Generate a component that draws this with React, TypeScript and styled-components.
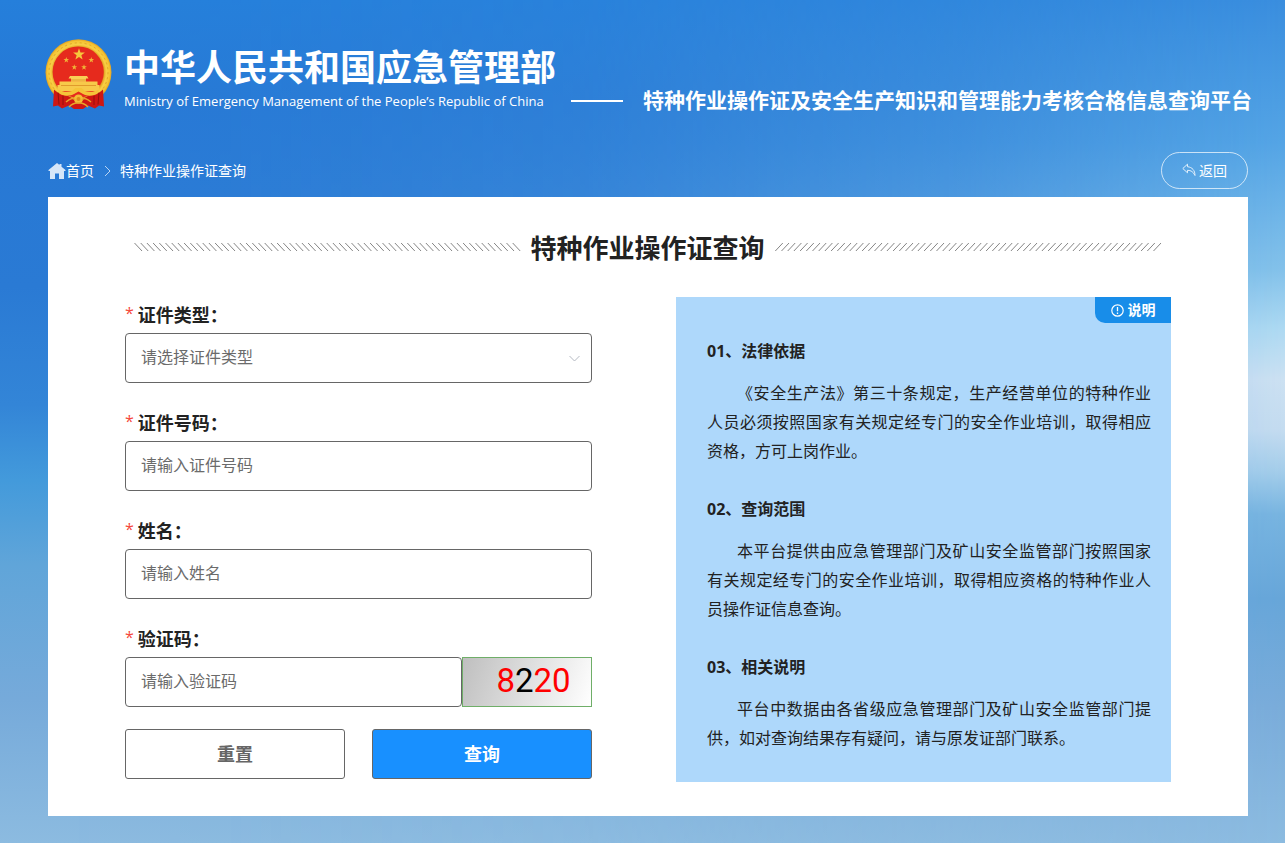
import React from 'react';
import styled, { createGlobalStyle } from 'styled-components';

const GlobalStyle = createGlobalStyle`
  *, *::before, *::after { box-sizing: border-box; }
  body {
    margin: 0;
    font-family: 'Open Sans', 'Noto Sans CJK SC', sans-serif;
    font-size: 16px;
    color: #222;
  }
  h1, h2, h3, p { margin: 0; }
  input, select, button { font-family: inherit; }
`;

const Page = styled.div`
  position: relative;
  isolation: isolate;
  min-height: 100vh;
  padding: 39px 37px 27px 48px;
  background: linear-gradient(
    180deg,
    #257fdb 0%, #2678d5 12%, #2a7ad4 34%, #3385d7 48%, #439adb 57%,
    #60a5d9 67%, #76aada 83%, #8cbbe0 100%
  );

  &::before {
    content: '';
    position: absolute;
    inset: 0;
    z-index: -1;
    background: linear-gradient(
      180deg,
      #3a8ede 0%, #55a5e5 17%, #84c2ea 32%, #aedaf2 39%, #cde1f2 45%,
      #c5dcf0 51%, #a4cdea 56%, #78b4e0 61%, #67a6d9 71%, #7aacda 84%, #8cbbe0 100%
    );
    mask-image: linear-gradient(90deg, transparent 5%, rgba(0, 0, 0, 0.2) 45%, rgba(0, 0, 0, 0.55) 75%, #000 100%);
  }
`;

const Header = styled.header`
  display: flex;
  align-items: flex-end;
  height: 71px;
  margin-left: -3px;
  color: #fff;
  white-space: nowrap;

  > * { flex: none; }
`;

const Ministry = styled.div`
  margin-left: 12px;
`;

const MinistryName = styled.h1`
  font-size: 36px;
  line-height: 48px;
  font-weight: 700;
`;

const MinistryEnglish = styled.p`
  font-size: 13px;
  line-height: 18px;
`;

const Dash = styled.span`
  width: 52px;
  height: 2px;
  margin: 0 20px 8px 15px;
  background: #fff;
`;

const Platform = styled.p`
  font-size: 21px;
  line-height: 20px;
  font-weight: 700;
`;

const NavRow = styled.div`
  display: flex;
  align-items: center;
  justify-content: space-between;
  margin: 42px 0 8px;
`;

const Crumbs = styled.nav`
  display: flex;
  align-items: center;
  font-size: 14px;
  line-height: 20px;
  color: #fff;
`;

const CrumbLink = styled.a`
  display: flex;
  align-items: center;
  color: inherit;
  text-decoration: none;
`;

const CrumbArrow = styled.svg`
  margin: 0 9px 0 10px;
`;

const BackButton = styled.button`
  display: flex;
  align-items: center;
  justify-content: center;
  gap: 3px;
  width: 87px;
  height: 37px;
  padding: 0 0 2px;
  border: 1px solid rgba(255, 255, 255, 0.7);
  border-radius: 19px;
  background: transparent;
  color: #fff;
  font-size: 14px;
  cursor: pointer;
`;

const Card = styled.main`
  padding: 33px 77px 34px;
  background: #fff;
`;

const TitleRow = styled.div`
  display: flex;
  align-items: center;
  gap: 10px;
  margin: 0 10px 31px 9px;
`;

const Title = styled.h2`
  font-size: 26px;
  line-height: 36px;
  font-weight: 700;
`;

const HatchSvg = styled.svg<{ $flip?: boolean }>`
  flex: 1;
  min-width: 0;
  height: 8px;
  margin-bottom: 2px;
  transform: ${(p) => (p.$flip ? 'scaleX(-1)' : 'none')};
`;

const Columns = styled.div`
  display: grid;
  grid-template-columns: 467fr 495fr;
  column-gap: 84px;
`;

const Form = styled.form`
  display: flex;
  flex-direction: column;
  gap: 22px;
`;

const Field = styled.div`
  display: flex;
  flex-direction: column;
`;

const Label = styled.label`
  display: flex;
  align-items: center;
  height: 36px;
  font-size: 18px;
  line-height: 36px;
  font-weight: 700;

  &::before {
    content: '*';
    margin-right: 4px;
    font-weight: 400;
    font-size: 16px;
    line-height: 32px;
    align-self: flex-start;
    color: #f5483b;
  }
`;

const controlStyle = `
  width: 100%;
  height: 50px;
  padding: 0 15px 2px;
  border: 1px solid #666;
  border-radius: 4px;
  background: #fff;
  font-size: 16px;
  color: #6b6b6b;
  outline: none;
`;

const TextInput = styled.input`
  ${controlStyle}
  min-width: 0;
  &::placeholder { color: #6b6b6b; opacity: 1; }
`;

const SelectWrap = styled.div`
  position: relative;
`;

const Select = styled.select`
  ${controlStyle}
  display: block;
  appearance: none;
`;

const SelectArrow = styled.svg`
  position: absolute;
  right: 12px;
  top: 22px;
  pointer-events: none;
`;

const CaptchaRow = styled.div`
  display: flex;
`;

const Captcha = styled.button`
  flex: none;
  width: 130px;
  height: 50px;
  padding: 0 0 2px 13px;
  border: 1px solid #6fae68;
  background: linear-gradient(110deg, #bfbfbf 0%, #fff 100%);
  font-family: Roboto, sans-serif;
  font-size: 33px;
  line-height: 44px;
  cursor: pointer;
`;

const Digit = styled.span<{ $color: string }>`
  color: ${(p) => p.$color};
`;

const Actions = styled.div`
  display: grid;
  grid-template-columns: 1fr 1fr;
  gap: 27px;
`;

const ActionButton = styled.button<{ $primary?: boolean }>`
  height: 50px;
  padding: 0 0 2px;
  border: 1px solid #666;
  border-radius: 3px;
  background: ${(p) => (p.$primary ? '#1890ff' : '#fff')};
  color: ${(p) => (p.$primary ? '#fff' : '#666')};
  font-size: 18px;
  font-weight: 700;
  cursor: pointer;
`;

const Notice = styled.aside`
  position: relative;
  display: flex;
  flex-direction: column;
  gap: 29px;
  padding: 40px 20px 29px 31px;
  background: #aed8fb;
  line-height: 29px;
`;

const NoticeTag = styled.div`
  position: absolute;
  top: 0;
  right: 0;
  display: flex;
  align-items: center;
  justify-content: center;
  gap: 4px;
  width: 76px;
  height: 26px;
  border-bottom-left-radius: 10px;
  background: #188de9;
  color: #fff;
  font-size: 14px;
  line-height: 26px;
  font-weight: 700;
`;

const NoticeHeading = styled.h3`
  margin-bottom: 13px;
  font-size: 16px;
  font-weight: 700;
`;

const NoticeText = styled.p`
  text-indent: 30px;
  text-align: justify;
`;

function starPoints(cx: number, cy: number, r: number) {
  return Array.from({ length: 10 }, (_, i) => {
    const radius = i % 2 ? r * 0.4 : r;
    const angle = (Math.PI / 5) * i - Math.PI / 2;
    return `${(cx + radius * Math.cos(angle)).toFixed(2)},${(cy + radius * Math.sin(angle)).toFixed(2)}`;
  }).join(' ');
}

const smallStars = [[21.3, 21], [46.3, 21], [29.3, 28.2], [39, 28.2]];

function Emblem() {
  return (
    <svg width="67" height="71" viewBox="0 0 67 71" role="img" aria-label="国徽">
      <defs>
        <radialGradient id="gold" cx="50%" cy="50%" r="50%">
          <stop offset="76%" stopColor="#dc9a1c" />
          <stop offset="84%" stopColor="#f8cf45" />
          <stop offset="94%" stopColor="#f5c534" />
          <stop offset="100%" stopColor="#e0a024" />
        </radialGradient>
      </defs>
      <circle cx="33.5" cy="33.3" r="33" fill="url(#gold)" />
      <circle cx="33.5" cy="33.3" r="29.5" fill="none" stroke="#e0a428" strokeWidth="1" strokeDasharray="2 3" />
      <circle cx="33.2" cy="33" r="25.6" fill="#e62a1d" />
      <polygon points={starPoints(34, 15.5, 6.2)} fill="#f6c83c" />
      {smallStars.map(([x, y]) => (
        <polygon key={`${x}-${y}`} points={starPoints(x, y, 3)} fill="#f0b437" />
      ))}
      <path d="M25 37h17l1.500 2.500h-20z M26 39.500h15v3.200h-15z" fill="#f9cf55" />
      <path d="M14.500 42.500h38v3.500h2v6H12.500v-6h2z" fill="#f7c94a" />
      <path d="M16 46.500h35M26 41h15" stroke="#d98f25" strokeWidth=".8" />
      <path d="M9 50.500c4 4 9 6 14 6.500l10 5 10-5c6-.5 11-2.500 15-6.500l1 17-5-1-4 3-7-3-5 3.500h-9l-5-3.500-7 3-4-3-5 1z" fill="#cf1713" />
      <path d="M13 53.500l1 12M18 57l0 9M49 57l0 9M54 53.500l-1 12" stroke="#96100d" strokeWidth="1" />
      <path d="M13 50.500c6 3 10 2.500 14 1.500l3.500-3h6l3.500 3c4 1 8 1.500 14-1.500l-2 4.500c-5 2-10 2-14 0l-4.500-2.500L29 55c-4 2-9 2-14 0z" fill="#f5c439" />
      <circle cx="33.500" cy="60" r="4.600" fill="#f3bd36" />
      <circle cx="33.500" cy="60" r="2" fill="#dc8d1c" />
      <path d="M21 63c4-3.500 7-4.500 9-2M46 63c-4-3.500-7-4.500-9-2M24 68c3-3 5-4 8-4h3c3 0 5 1 8 4" fill="none" stroke="#e7a52b" strokeWidth="1.500" />
    </svg>
  );
}

const hatchPath = Array.from({ length: 62 }, (_, i) => `M${(i * 6.2 + 0.5).toFixed(1)} 0l7.500 8`).join('');

function Hatch({ flip }: { flip?: boolean }) {
  return (
    <HatchSvg $flip={flip} aria-hidden="true">
      <path d={hatchPath} fill="none" stroke="#666" strokeWidth="0.8" />
    </HatchSvg>
  );
}

const notices = [
  {
    title: '01、法律依据',
    text: '《安全生产法》第三十条规定，生产经营单位的特种作业人员必须按照国家有关规定经专门的安全作业培训，取得相应资格，方可上岗作业。',
  },
  {
    title: '02、查询范围',
    text: '本平台提供由应急管理部门及矿山安全监管部门按照国家有关规定经专门的安全作业培训，取得相应资格的特种作业人员操作证信息查询。',
  },
  {
    title: '03、相关说明',
    text: '平台中数据由各省级应急管理部门及矿山安全监管部门提供，如对查询结果存有疑问，请与原发证部门联系。',
  },
];

const captcha = [
  { digit: '8', color: '#f00' },
  { digit: '2', color: '#000' },
  { digit: '2', color: '#f00' },
  { digit: '0', color: '#f00' },
];

export default function App() {
  return (
    <Page lang="zh-CN">
      <GlobalStyle />
      <Header>
        <Emblem />
        <Ministry>
          <MinistryName>中华人民共和国应急管理部</MinistryName>
          <MinistryEnglish>Ministry of Emergency Management of the People’s Republic of China</MinistryEnglish>
        </Ministry>
        <Dash />
        <Platform>特种作业操作证及安全生产知识和管理能力考核合格信息查询平台</Platform>
      </Header>

      <NavRow>
        <Crumbs aria-label="面包屑">
          <CrumbLink href="#">
            <svg width="18" height="18" viewBox="0 0 18 18" aria-hidden="true">
              <path d="M9 1l2.500 2V2h2v2.700L17.500 8v1H16v8h-5v-5.500H7V17H2V9H.5V8z" fill="#d6e6f8" />
            </svg>
            首页
          </CrumbLink>
          <CrumbArrow width="7" height="12" viewBox="0 0 7 12" aria-hidden="true">
            <path d="M1 1l5 5-5 5" fill="none" stroke="#b9d4f2" strokeWidth="1" />
          </CrumbArrow>
          <span>特种作业操作证查询</span>
        </Crumbs>
        <BackButton type="button">
          <svg width="14" height="14" viewBox="0 0 14 14" aria-hidden="true">
            <path
              d="M5.500 1.200L.8 5.500l4.700 4.300V7.300c3.500 0 5.800 1.500 7.500 5.200 0-5-2.700-8.300-7.500-8.800z"
              fill="none"
              stroke="#e4f0fb"
              strokeWidth="1"
              strokeLinejoin="round"
            />
          </svg>
          返回
        </BackButton>
      </NavRow>

      <Card>
        <TitleRow>
          <Hatch />
          <Title>特种作业操作证查询</Title>
          <Hatch flip />
        </TitleRow>
        <Columns>
          <Form onSubmit={(e) => e.preventDefault()}>
            <Field>
              <Label htmlFor="id-type">证件类型：</Label>
              <SelectWrap>
                <Select id="id-type" defaultValue="">
                  <option value="">请选择证件类型</option>
                </Select>
                <SelectArrow width="11" height="7" viewBox="0 0 11 7" aria-hidden="true">
                  <path d="M.5 1l5 5 5-5" fill="none" stroke="#b4b9c2" strokeWidth="1" />
                </SelectArrow>
              </SelectWrap>
            </Field>
            <Field>
              <Label htmlFor="id-number">证件号码：</Label>
              <TextInput id="id-number" placeholder="请输入证件号码" />
            </Field>
            <Field>
              <Label htmlFor="full-name">姓名：</Label>
              <TextInput id="full-name" placeholder="请输入姓名" />
            </Field>
            <Field>
              <Label htmlFor="captcha">验证码：</Label>
              <CaptchaRow>
                <TextInput id="captcha" placeholder="请输入验证码" />
                <Captcha type="button">
                  {captcha.map((c, i) => (
                    <Digit key={i} $color={c.color}>{c.digit}</Digit>
                  ))}
                </Captcha>
              </CaptchaRow>
            </Field>
            <Actions>
              <ActionButton type="reset">重置</ActionButton>
              <ActionButton type="submit" $primary>查询</ActionButton>
            </Actions>
          </Form>

          <Notice>
            <NoticeTag>
              <svg width="13" height="13" viewBox="0 0 13 13" aria-hidden="true">
                <circle cx="6.500" cy="6.500" r="5.700" fill="none" stroke="#fff" strokeWidth="1.200" />
                <path d="M6.500 3v4.300M6.500 8.600v1.400" stroke="#fff" strokeWidth="1.300" />
              </svg>
              说明
            </NoticeTag>
            {notices.map((n) => (
              <section key={n.title}>
                <NoticeHeading>{n.title}</NoticeHeading>
                <NoticeText>{n.text}</NoticeText>
              </section>
            ))}
          </Notice>
        </Columns>
      </Card>
    </Page>
  );
}
